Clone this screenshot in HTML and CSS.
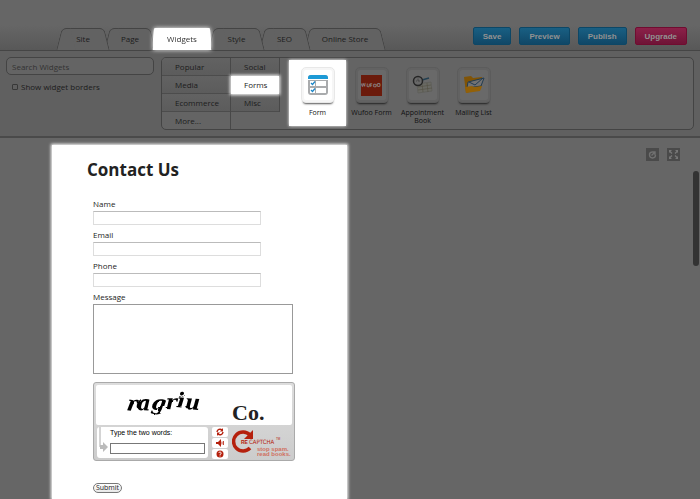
FILE: index.html
```html
<!DOCTYPE html>
<html lang="en">

<head>
    <meta charset="UTF-8">
    <meta name="viewport" content="width=device-width, initial-scale=1.0">
    <title>Site Editor</title>
    <link rel="stylesheet" href="styles.css">
</head>

<body>
    <div class="editor">
        <header class="topbar">
            <nav class="tabs">
                <button class="tab tab-site"><span>Site</span></button>
                <button class="tab tab-page"><span>Page</span></button>
                <button class="tab tab-widgets active"><span>Widgets</span></button>
                <button class="tab tab-style"><span>Style</span></button>
                <button class="tab tab-seo"><span>SEO</span></button>
                <button class="tab tab-store"><span>Online Store</span></button>
            </nav>
            <div class="actions">
                <button class="action">Save</button>
                <button class="action">Preview</button>
                <button class="action">Publish</button>
                <button class="action upgrade">Upgrade</button>
            </div>
        </header>

        <section class="toolbar">
            <div class="search">
                <input class="search-input" type="text" placeholder="Search Widgets" aria-label="Search Widgets">
                <label class="borders-label"><input class="borders-check" type="checkbox">Show widget borders</label>
            </div>
            <div class="widget-panel">
                <div class="categories categories-main">
                    <button class="category">Popular</button>
                    <button class="category">Media</button>
                    <button class="category">Ecommerce</button>
                    <button class="category">More...</button>
                </div>
                <div class="categories categories-sub">
                    <button class="category">Social</button>
                    <button class="category selected">Forms</button>
                    <button class="category">Misc</button>
                </div>
                <div class="widgets">
                    <button class="widget selected">
                        <span class="widget-icon">
                            <svg width="20" height="20" viewBox="0 0 20 20">
                                <rect x="0" y="0" width="20" height="20" rx="3" fill="#a9abad" />
                                <path d="M0 4V3a3 3 0 0 1 3-3h14a3 3 0 0 1 3 3v1z" fill="#1c9ad6" />
                                <path d="M0 4h20v1H0z" fill="#fff" />
                                <rect x="2" y="6" width="5" height="5" fill="#fff" />
                                <rect x="8" y="6" width="10" height="5" fill="#fff" />
                                <rect x="2" y="13" width="5" height="5" fill="#fff" />
                                <rect x="8" y="13" width="10" height="5" fill="#fff" />
                                <path d="M3 8l1.500 1.500L7 6.500M3 15l1.500 1.500L7 13.500" fill="none" stroke="#1c86c8" stroke-width="1.300" />
                            </svg>
                        </span>
                        Form
                    </button>
                    <button class="widget">
                        <span class="widget-icon">
                            <svg width="21" height="21" viewBox="0 0 21 21">
                                <rect width="21" height="21" fill="#6b1b0c" />
                                <text x="10" y="12" text-anchor="middle" rotate="-8 6 -6 8 0" class="wufoo-text">WUFOO</text>
                            </svg>
                        </span>
                        Wufoo Form
                    </button>
                    <button class="widget">
                        <span class="widget-icon">
                            <svg width="22" height="20" viewBox="0 0 22 20">
                                <path d="M5 9l14-2 1 9-14 2z" fill="#696963" stroke="#5a5a56" stroke-width="0.600" />
                                <path d="M6 12l13-2M6 15l14-2M10 9l1 8M15 8l1 9" stroke="#4f4a3c" stroke-width="0.500" />
                                <path d="M10 5l7-2" stroke="#234052" stroke-width="1.500" />
                                <circle cx="6" cy="6" r="4.500" fill="#686868" stroke="#252525" stroke-width="1.500" />
                                <path d="M6 3.500V6h2M4 6h1" stroke="#3b3b3b" stroke-width="0.700" fill="none" />
                            </svg>
                        </span>
                        Appointment Book
                    </button>
                    <button class="widget">
                        <span class="widget-icon">
                            <svg width="22" height="20" viewBox="0 0 22 20">
                                <path d="M1 2l7-1 2 2 9-1-1 12L3 18z" fill="#805407" />
                                <path d="M5 7l16-4-3 8-14 2z" fill="#727272" stroke="#223c51" />
                                <path d="M6 7l6 3 8-7" fill="none" stroke="#223c51" />
                                <path d="M2 12l7-1 2 1 8-1-2 5-14 2z" fill="#936108" />
                            </svg>
                        </span>
                        Mailing List
                    </button>
                </div>
            </div>
        </section>

        <main class="canvas">
            <div class="canvas-tools">
                <button class="tool" aria-label="Refresh">
                    <svg width="13" height="13" viewBox="0 0 13 13" fill="none" stroke="#707070" stroke-width="1.400">
                        <path d="M6 4a3 3 0 1 0 3.500 3M5.500 7.500L9 4M9 7V4H6" />
                    </svg>
                </button>
                <button class="tool" aria-label="Full screen">
                    <svg width="13" height="13" viewBox="0 0 13 13">
                        <path d="M5 5.500L3 3.500M8 5.500l2-2M5 7.500l-2 2M8 7.500l2 2" fill="none" stroke="#777" stroke-width="1.300" />
                        <path d="M2 2h3L2 5zM11 2v3L8 2zM2 11V8l3 3zM11 11H8l3-3z" fill="#777" />
                    </svg>
                </button>
            </div>
            <div class="scroll-thumb"></div>

            <form class="contact" onsubmit="return false">
                <h1 class="contact-title">Contact Us</h1>
                <div class="fields">
                    <label class="field-label" for="name">Name</label>
                    <input class="field" id="name" type="text">
                    <label class="field-label" for="email">Email</label>
                    <input class="field" id="email" type="text">
                    <label class="field-label" for="phone">Phone</label>
                    <input class="field" id="phone" type="text">
                    <label class="field-label" for="message">Message</label>
                    <textarea class="field message" id="message"></textarea>

                    <div class="captcha">
                        <div class="captcha-words">
                            <svg width="196" height="40" viewBox="0 0 196 40">
                                <filter id="wobble">
                                    <feTurbulence type="turbulence" baseFrequency="0.060" numOctaves="1" seed="3" />
                                    <feDisplacementMap in="SourceGraphic" scale="3" />
                                </filter>
                                <text x="29" y="22" dy="2 0 -1 0 -1 1" rotate="10 2 8 2 6 4" class="word-one" filter="url(#wobble)">ragriu</text>
                                <text x="136" y="35" class="word-two">Co.</text>
                            </svg>
                        </div>
                        <div class="captcha-bottom">
                            <div class="captcha-answer">
                                <svg class="captcha-arrow" width="10" height="27" viewBox="0 0 10 27">
                                    <path d="M2 0v20" fill="none" stroke="#aaa" />
                                    <path d="M2 18h3v-3l5 5-5 5v-3H2z" fill="#bbb" />
                                </svg>
                                <div class="captcha-entry">
                                    <label class="captcha-label" for="captcha">Type the two words:</label>
                                    <input class="captcha-input" id="captcha" type="text">
                                </div>
                            </div>
                            <div class="captcha-buttons">
                                <button type="button" aria-label="New words">
                                    <svg width="8" height="8" viewBox="0 0 8 8">
                                        <path d="M1 4a3 3 0 0 1 5-2M7 4a3 3 0 0 1-5 2" fill="none" stroke="#b5200d" stroke-width="1.400" />
                                        <path d="M7 0v3.500H4zM1 8V4.500h3z" fill="#b5200d" />
                                    </svg>
                                </button>
                                <button type="button" aria-label="Audio">
                                    <svg width="8" height="8" viewBox="0 0 8 8">
                                        <path d="M0 3h2l3-3v8L2 5H0z" fill="#b5200d" />
                                        <path d="M6 2.500v3M7.500 2v4" stroke="#b5200d" stroke-width="0.800" />
                                    </svg>
                                </button>
                                <button type="button" aria-label="Help">
                                    <svg width="8" height="8" viewBox="0 0 8 8">
                                        <circle cx="4" cy="4" r="3.500" fill="#b5200d" />
                                        <path d="M2.800 3a1.200 1.200 0 1 1 1.200 1.400v.6M4 5.500v1" fill="none" stroke="#fff" stroke-width="0.900" />
                                    </svg>
                                </button>
                            </div>
                            <svg class="captcha-logo" width="60" height="31" viewBox="0 0 60 31">
                                <path d="M18 8A9.500 9.500 0 1 0 18 21" fill="none" stroke="#b5200d" stroke-width="3.500" />
                                <path d="M21 3v9h-9z" fill="#b5200d" />
                                <text x="9" y="17" class="logo-re">RE</text>
                                <text x="17" y="17" class="logo-name">CAPTCHA</text>
                                <text x="44" y="13" class="logo-tm">TM</text>
                                <text x="25" y="24" class="logo-line">stop spam.</text>
                                <text x="25" y="29" class="logo-line">read books.</text>
                            </svg>
                        </div>
                    </div>

                    <button class="submit" type="submit">Submit</button>
                </div>
            </form>
        </main>
    </div>
</body>

</html>
```
FILE: styles.css
```css
* {
    box-sizing: border-box;
}

body {
    margin: 0;
    font-family: "Open Sans", "Noto Sans", sans-serif;
    font-size: 8px;
    color: #1c1c1c;
    background-color: #666;
}

button,
input,
textarea {
    font: inherit;
    color: inherit;
    margin: 0;
}

button {
    padding: 0;
    border: 0;
    background: none;
}

.editor {
    height: 100vh;
    display: flex;
    flex-direction: column;
    overflow: hidden;
}

.topbar {
    height: 51px;
    flex: none;
    display: flex;
    align-items: flex-end;
    justify-content: space-between;
    padding: 0 13px 0 59px;
    background: linear-gradient(#666 50%, #585858);
    border-bottom: 1px solid #454545;
}

/* tabs */
.tabs {
    display: flex;
    isolation: isolate;
}

.tab {
    height: 22px;
    position: relative;
    padding-bottom: 2px;
}

.tab::before,
.tab::after {
    content: "";
    position: absolute;
    top: 0;
    bottom: 0;
    background-color: #626262;
    border: 1px solid #444;
    border-bottom: 0;
}

.tab::before {
    left: 0;
    right: 30%;
    border-right: 0;
    border-radius: 5px 0 0 0;
    transform: skewX(-14deg);
}

.tab::after {
    left: 30%;
    right: 0;
    border-left: 0;
    border-radius: 0 5px 0 0;
    transform: skewX(14deg);
}

.tab span {
    position: relative;
    z-index: 1;
}

.tab-site {
    width: 48px;
    z-index: 5;
}

.tab-page {
    width: 46px;
    z-index: 4;
}

.tab-widgets {
    width: 58px;
}

.tab-style {
    width: 51px;
    z-index: 3;
}

.tab-seo {
    width: 45px;
    z-index: 2;
}

.tab-store {
    width: 76px;
    z-index: 1;
}

.tab.active {
    z-index: 6;
    filter: drop-shadow(0 0 2px #fff);
}

.tab.active::before,
.tab.active::after {
    background-color: #fff;
    border-color: #fff;
}

.tab.active::before {
    border-radius: 2px 0 0 0;
    transform: skewX(-3deg);
}

.tab.active::after {
    border-radius: 0 2px 0 0;
    transform: skewX(3deg);
}

.tab.active span {
    color: #333;
}

/* action buttons */
.actions {
    display: flex;
    gap: 8px;
    padding-bottom: 5px;
}

.action {
    height: 18px;
    padding: 0 9px;
    border: 1px solid #0d4766;
    border-radius: 2px;
    background: linear-gradient(#195f83, #104767);
    color: #929292;
    font-family: "Liberation Sans", Arial, sans-serif;
    font-weight: bold;
    font-size: 8px;
}

.upgrade {
    border-color: #700c30;
    background: linear-gradient(#8b2149, #6f1336);
}

/* toolbar */
.toolbar {
    flex: none;
    display: flex;
    gap: 7px;
    padding: 6px;
    background-color: #606060;
    border-bottom: 2px solid #4a4a4a;
}

.search {
    width: 148px;
}

.search-input {
    display: block;
    width: 100%;
    height: 18px;
    padding: 0 5px;
    border: 1px solid #444;
    border-radius: 5px;
    background-color: #646464;
}

.search-input::placeholder {
    color: #333;
    opacity: 1;
}

.borders-label {
    display: flex;
    align-items: center;
    gap: 3px;
    margin-top: 6px;
    padding-left: 6px;
}

.borders-check {
    appearance: none;
    width: 6px;
    height: 6px;
    border: 1px solid #383838;
    border-radius: 1px;
}

.widget-panel {
    flex: 1;
    height: 73px;
    display: flex;
    border: 1px solid #444;
    border-radius: 5px;
    background-color: #646464;
}

.categories {
    display: flex;
    flex-direction: column;
    border-right: 1px solid #484848;
}

.categories-main {
    width: 69px;
}

.categories-sub {
    width: 49px;
    height: 54px;
}

.category {
    height: 18px;
    flex: none;
    padding: 0 0 1px 13px;
    text-align: left;
    border-bottom: 1px solid #4c4c4c;
    background: linear-gradient(#626262, #5c5c5c);
}

.category:first-child {
    border-top-left-radius: 4px;
}

.categories-sub .category:first-child {
    border-top-left-radius: 0;
}

.categories-main .category:last-child {
    border-bottom: 0;
    border-bottom-left-radius: 4px;
    background: none;
}

.category.selected {
    position: relative;
    border-color: #fff;
    background: #fff;
    box-shadow: 0 0 3px 1px #fff;
}

.widgets {
    display: flex;
    padding: 2px 0 3px 9px;
}

.widget {
    width: 51px;
    display: flex;
    flex-direction: column;
    align-items: center;
    gap: 6px;
    padding-top: 7px;
    font-size: 7px;
    line-height: 8px;
    color: #111;
}

.widget.selected {
    width: 57px;
    background-color: #fff;
    box-shadow: 0 0 3px #fff;
}

.widget-icon {
    width: 34px;
    height: 36px;
    flex: none;
    display: flex;
    align-items: center;
    justify-content: center;
    border: 1px solid #5c5c5c;
    border-radius: 5px;
    background-color: #696969;
    box-shadow: inset 0 0 0 2px #626262, 0 3px 2px -2px #222;
}

.widget.selected .widget-icon {
    border-color: #e8e8e8;
    background-color: #fff;
    box-shadow: inset 0 0 0 2px #f6f6f6, 0 3px 2px -2px #555;
}

.wufoo-text {
    font-size: 5px;
    font-weight: bold;
    fill: #909090;
}

/* canvas */
.canvas {
    flex: 1;
    min-height: 0;
    position: relative;
    padding: 7px 0 0 52px;
    background-color: #666;
}

.canvas-tools {
    position: absolute;
    top: 10px;
    right: 20px;
    display: flex;
    gap: 8px;
}

.tool {
    width: 13px;
    height: 13px;
    background-color: #4a4a4a;
}

.tool svg {
    display: block;
}

.scroll-thumb {
    position: absolute;
    top: 33px;
    right: 1px;
    width: 6px;
    height: 95px;
    border-radius: 3px;
    background-color: #333;
}

/* contact form */
.contact {
    width: 295px;
    height: 100%;
    padding: 13px 35px 0;
    background-color: #fff;
    box-shadow: 0 0 3px 1px #fff;
}

.contact-title {
    margin: 0;
    font-size: 17px;
    line-height: 24px;
    color: #222;
}

.fields {
    width: 208px;
    padding: 17px 0 0 6px;
}

.field-label {
    display: block;
    height: 12px;
    line-height: 10px;
}

.field {
    display: block;
    width: 168px;
    height: 14px;
    margin-bottom: 5px;
    border: 1px solid #ddd;
    border-top-color: #bbb;
    background-color: #fff;
}

.message {
    width: 200px;
    height: 70px;
    margin-bottom: 8px;
    border-color: #999;
    resize: none;
}

.captcha {
    width: 202px;
    height: 79px;
    padding: 2px;
    border: 1px solid #aaa;
    border-radius: 3px;
    background: linear-gradient(#ddd, #ccc);
}

.captcha-words {
    height: 40px;
    border-radius: 2px;
    background-color: #fff;
}

.captcha-words svg {
    display: block;
}

.word-one {
    font: italic bold 21px "DejaVu Serif", serif;
    fill: #000;
}

.word-two {
    font: bold 22px "Liberation Serif", serif;
    fill: #222;
}

.captcha-bottom {
    display: flex;
    gap: 4px;
    padding: 2px 0 0 1px;
}

.captcha-answer {
    width: 111px;
    height: 31px;
    display: flex;
    gap: 2px;
    padding: 0 1px;
    border-radius: 3px;
    background-color: #fff;
}

.captcha-entry {
    flex: 1;
}

.captcha-label {
    display: block;
    height: 16px;
    font: 7px/12px "Liberation Sans", Arial, sans-serif;
    color: #000;
}

.captcha-input {
    display: block;
    width: 95px;
    height: 11px;
    border: 1px solid #777;
}

.captcha-buttons {
    width: 16px;
    display: flex;
    flex-direction: column;
    gap: 1px;
}

.captcha-buttons button {
    height: 10px;
    display: flex;
    align-items: center;
    justify-content: center;
    border-radius: 2px;
    background-color: #fff;
}

.captcha-logo {
    flex: none;
}

.captcha-logo text {
    font-family: "Liberation Sans", Arial, sans-serif;
    fill: #b5200d;
}

.captcha-logo .logo-re {
    font-size: 5px;
    font-weight: bold;
}

.captcha-logo .logo-name {
    font-family: "DejaVu Sans Condensed", "DejaVu Sans", sans-serif;
    font-size: 6px;
}

.captcha-logo .logo-tm {
    font-size: 3px;
}

.captcha-logo .logo-line {
    font-size: 6px;
    font-weight: bold;
    fill: #d0705f;
}

.submit {
    display: block;
    width: 29px;
    height: 10px;
    margin-top: 22px;
    border: 1px solid #777;
    border-radius: 5px;
    background: linear-gradient(#fff, #e8e8e8);
    font-size: 7px;
    line-height: 8px;
}
```
